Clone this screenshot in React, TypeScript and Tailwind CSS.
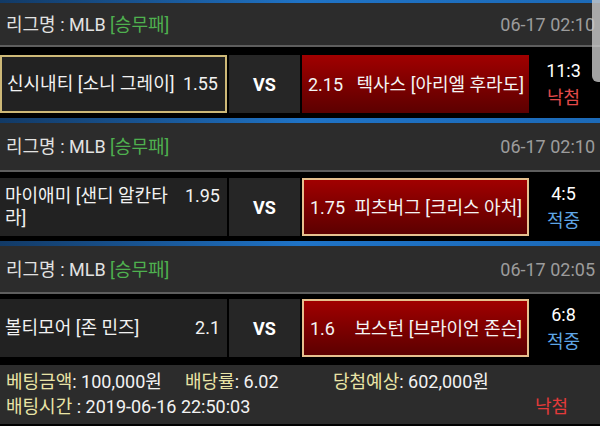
import React from "react";

type Game = {
  date: string;
  home: string;
  homeOdds: string;
  away: string;
  awayOdds: string;
  score: string;
  result: "낙첨" | "적중";
  homeSel: boolean;
  awaySel: boolean;
  headerH: string;
  gapTop: string;
  homeTop?: boolean;
};

const games: Game[] = [
  {
    date: "06-17 02:10",
    home: "신시내티 [소니 그레이]",
    homeOdds: "1.55",
    away: "텍사스 [아리엘 후라도]",
    awayOdds: "2.15",
    score: "11:3",
    result: "낙첨",
    homeSel: true,
    awaySel: false,
    headerH: "h-[42px]",
    gapTop: "h-[8px]",
  },
  {
    date: "06-17 02:10",
    home: "마이애미 [샌디 알칸타라]",
    homeOdds: "1.95",
    away: "피츠버그 [크리스 아처]",
    awayOdds: "1.75",
    score: "4:5",
    result: "적중",
    homeSel: false,
    awaySel: true,
    headerH: "h-[47px]",
    gapTop: "h-[6px]",
    homeTop: true,
  },
  {
    date: "06-17 02:05",
    home: "볼티모어 [존 민즈]",
    homeOdds: "2.1",
    away: "보스턴 [브라이언 존슨]",
    awayOdds: "1.6",
    score: "6:8",
    result: "적중",
    homeSel: false,
    awaySel: true,
    headerH: "h-[46px]",
    gapTop: "h-[5px]",
  },
];

function BlueLine({ h }: { h: string }) {
  return (
    <div
      className={`${h} w-full bg-linear-to-r from-[#123a66] via-[#1f73c6] to-[#1c6ab8]`}
    />
  );
}

function Block({ g, last }: { g: Game; last: boolean }) {
  return (
    <div className="flex flex-col">
      <div
        className={`${g.headerH} flex items-center justify-between bg-[#2c2c2c] pl-[6px] pr-[5px]`}
      >
        <div className="text-[18px] text-[#e2e2e2]">
          리그명 : MLB <span className="text-[#4fb04f]">[승무패]</span>
        </div>
        <div className="text-[18px] text-[#9c9c9c]">{g.date}</div>
      </div>
      <div className="h-[2px] bg-[#5e5e5e]" />
      <div className={`${g.gapTop} bg-black`} />
      <div className="flex h-[58px] bg-black gap-[2px]">
        <div
          className={`w-[227px] flex items-center bg-[#222222] pl-[5px] pr-[7px] ${
            g.homeSel ? "border-2 border-[#cdb877]" : ""
          }`}
        >
          <div
            className={`flex w-full justify-between ${
              g.homeTop ? "items-start" : "items-center"
            } text-[18px] leading-[22px] text-[#f2f2f2]`}
          >
            <span className={g.homeTop ? "w-[165px]" : ""}>{g.home}</span>
            <span>{g.homeOdds}</span>
          </div>
        </div>
        <div className="w-[71px] flex items-center justify-center bg-[#262626] text-[18px] font-bold text-white">
          VS
        </div>
        <div
          className={`w-[227px] flex items-center justify-between bg-linear-to-b from-[#a10000] to-[#5c0000] pl-[6px] pr-[5px] text-[18px] text-[#f4f4f4] ${
            g.awaySel ? "border-2 border-[#e6c08e]" : ""
          }`}
        >
          <span>{g.awayOdds}</span>
          <span>{g.away}</span>
        </div>
        <div className="flex-1 flex flex-col items-center justify-center pr-[4px] text-[18px] leading-[27px]">
          <span className="text-white">{g.score}</span>
          <span
            className={g.result === "낙첨" ? "text-[#e24a4a]" : "text-[#5fa6e6]"}
          >
            {g.result}
          </span>
        </div>
      </div>
      {!last && (
        <>
          <div className="h-[5px] bg-black" />
          <BlueLine h="h-[5px]" />
        </>
      )}
    </div>
  );
}

export default function App() {
  return (
    <div className="relative w-[600px] h-[426px] overflow-hidden bg-black font-[Roboto,'Noto_Sans_CJK_KR',sans-serif]">
      <BlueLine h="h-[3px]" />
      {games.map((g, i) => (
        <Block key={i} g={g} last={i === games.length - 1} />
      ))}
      <div className="h-[8px] bg-black" />
      <div className="h-[59px] bg-[#2c2c2c] pl-[6px] pt-[4px] text-[18px] leading-[25px] text-[#f2f2f2]">
        <div className="flex">
          <div className="w-[179px]">
            <span className="text-[#e9e4a6]">베팅금액</span>: 100,000원
          </div>
          <div className="w-[148px]">
            <span className="text-[#e9e4a6]">배당률</span>: 6.02
          </div>
          <div>
            <span className="text-[#e9e4a6]">당첨예상</span>: 602,000원
          </div>
        </div>
        <div className="flex">
          <div>
            <span className="text-[#e9e4a6]">배팅시간</span> : 2019-06-16 22:50:03
          </div>
          <div className="ml-auto mr-[32px] text-[#e33a3a]">낙첨</div>
        </div>
      </div>
      <div className="absolute top-0 right-0 w-[8px] h-[82px] rounded-bl-[6px] bg-[#c9c9c9]/80" />
    </div>
  );
}
